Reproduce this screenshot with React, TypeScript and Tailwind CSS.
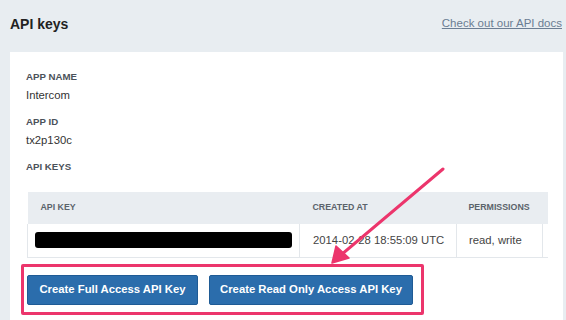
const keys = [
  { created: '2014-02-28 18:55:09 UTC', permissions: 'read, write' },
]

export default function App() {
  return (
    <div className="relative w-[566px] h-[320px] overflow-hidden bg-[#e8edf1] font-['Liberation_Sans',Arial,sans-serif] text-[#333]">
      {/* Header */}
      <div className="flex items-center justify-between h-[52px] pl-[10px] pr-[4px] pb-[4px]">
        <h1 className="text-[14px] font-bold text-[#222]">API keys</h1>
        <a href="#" className="text-[11.5px] text-[#6b7d93] underline">
          Check out our API docs
        </a>
      </div>

      {/* Card */}
      <div className="ml-[10px] mr-[3px] h-[268px] bg-white px-[16px] pt-[19px]">
        <div className="text-[9.7px] leading-[12px] font-bold text-[#4b525a]">APP NAME</div>
        <div className="mt-[4px] text-[11.3px] leading-[16px]">Intercom</div>
        <div className="mt-[13px] text-[9.7px] leading-[12px] font-bold text-[#4b525a]">APP ID</div>
        <div className="mt-[4px] text-[11.3px] leading-[16px]">tx2p130c</div>
        <div className="mt-[13px] text-[9.7px] leading-[12px] font-bold text-[#4b525a]">API KEYS</div>

        <table className="mt-[19px] ml-px w-[521px] border-collapse table-fixed">
          <thead>
            <tr className="h-[32px] bg-[#e9edf1] text-left text-[8.8px] font-bold text-[#5b636b]">
              <th className="w-[272px] pl-[13px] font-bold">API KEY</th>
              <th className="w-[157px] pl-[13px] font-bold">CREATED AT</th>
              <th className="w-[86px] pl-[12px] font-bold">PERMISSIONS</th>
              <th className="font-bold"></th>
            </tr>
          </thead>
          <tbody>
            {keys.map((k) => (
              <tr key={k.created} className="h-[33px] text-[11.3px] text-[#444]">
                <td className="border-l border-b border-[#e3e7eb] pl-[7px] pr-[8px]">
                  <div className="h-[16px] w-[257px] rounded-[3px] bg-black" />
                </td>
                <td className="border-l border-b border-[#e3e7eb] pl-[13px] whitespace-nowrap">{k.created}</td>
                <td className="border-l border-b border-[#e3e7eb] pl-[12px] whitespace-nowrap">{k.permissions}</td>
                <td className="border-l border-b border-[#e3e7eb]"></td>
              </tr>
            ))}
          </tbody>
        </table>

        <div className="mt-[17px] ml-px flex gap-[11px]">
          <button className="h-[30px] w-[171px] rounded-[2px] border border-[#1f5b95] bg-[#2b6dac] text-[11.3px] font-bold text-white">
            Create Full Access API Key
          </button>
          <button className="h-[30px] w-[204px] rounded-[2px] border border-[#1f5b95] bg-[#2b6dac] text-[11.3px] font-bold text-white">
            Create Read Only Access API Key
          </button>
        </div>
      </div>

      {/* Annotation: highlight box */}
      <div className="absolute left-[21px] top-[264px] w-[403px] h-[51px] border-[3px] border-[#ec356c] rounded-[2px]" />

      {/* Annotation: arrow */}
      <svg className="absolute left-0 top-0" width="566" height="320" viewBox="0 0 566 320">
        <line x1="443" y1="169" x2="341" y2="255" stroke="#ec356c" strokeWidth="3" strokeLinecap="round" />
        <polygon points="332,263 336,246 349,258" fill="#ec356c" stroke="#ec356c" strokeWidth="1.5" strokeLinejoin="round" />
      </svg>
    </div>
  )
}
